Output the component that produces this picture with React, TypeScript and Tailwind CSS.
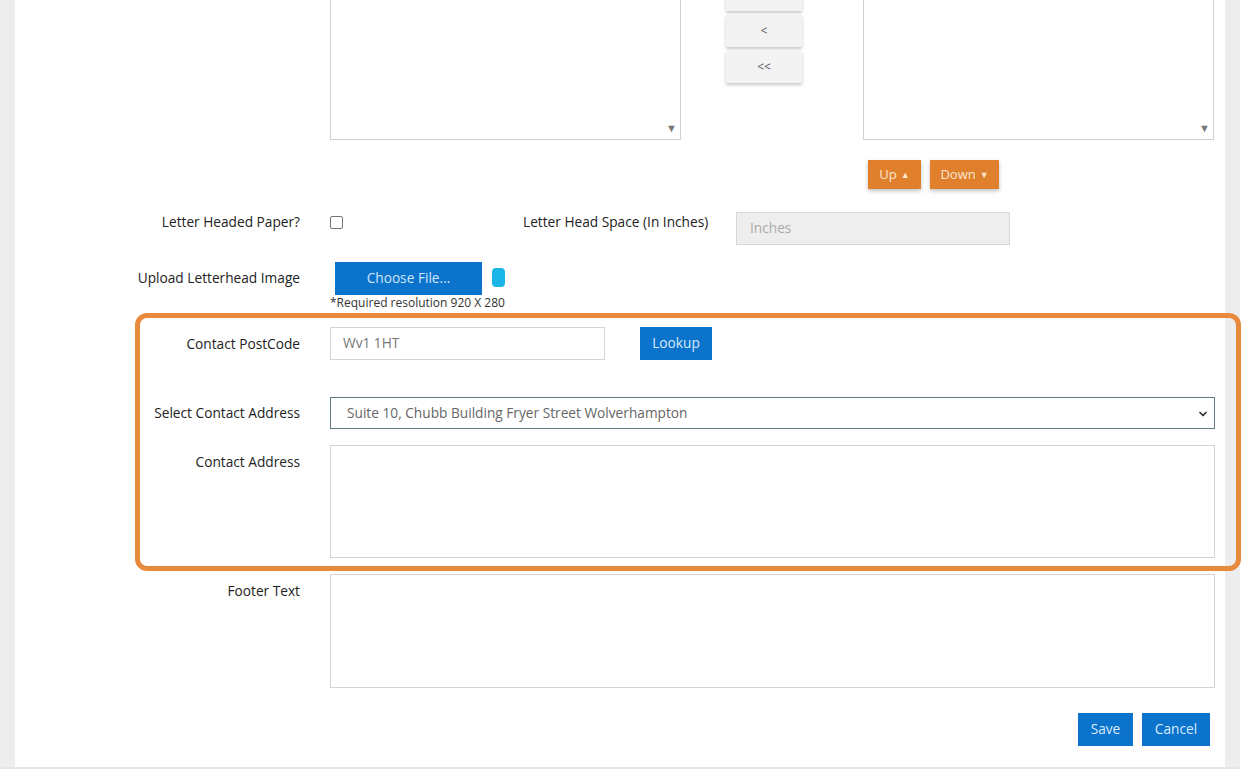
import React from 'react';
import { ChevronDown } from 'lucide-react';

const label = "text-right text-[13.7px] leading-5 text-[#222]";
const blueBtn = "bg-[#0b73cb] text-[13.7px] flex items-center justify-center";
const orangeBtn = "bg-[#e07f2c] text-[#fde7cf] text-[13px] flex items-center justify-center gap-1 shadow-[0_2px_4px_rgba(0,0,0,0.25)]";
const moveBtn = "h-[32px] w-[76px] bg-[#f3f3f3] text-[12px] text-[#555] flex items-center justify-center shadow-[0_2px_3px_rgba(0,0,0,0.22)]";

function ListBox() {
  return (
    <div className="relative h-full w-[351px] border-x border-b border-[#d2d2d2] bg-white">
      <span className="absolute right-[3px] bottom-[6px] text-[11px] leading-none text-[#777]">▼</span>
    </div>
  );
}

export default function App() {
  return (
    <div
      className="relative flex h-[769px] w-[1259px] overflow-hidden bg-white"
      style={{ fontFamily: '"Open Sans", "Liberation Sans", sans-serif' }}
    >
      <div className="w-[15px] bg-[#eeeded]" />

      {/* main card */}
      <div className="flex h-[767px] w-[1210px] flex-col bg-white">
        <div className="grid grid-cols-[285px_1fr] gap-x-[30px] pr-[10px]">
          {/* list boxes */}
          <div />
          <div className="flex h-[140px] items-start">
            <ListBox />
            <div className="ml-[45px] -mt-[21px] flex flex-col gap-[4px]">
              <button className={moveBtn} aria-label="move right" />
              <button className={moveBtn}>&lt;</button>
              <button className={moveBtn}>&lt;&lt;</button>
            </div>
            <div className="ml-[61px] h-full">
              <ListBox />
            </div>
          </div>

          {/* up / down */}
          <div />
          <div className="mt-[20px] flex h-[29px] gap-[9px] pl-[538px]">
            <button className={`${orangeBtn} w-[53px]`}>Up <span className="text-[9px]">▲</span></button>
            <button className={`${orangeBtn} w-[69px]`}>Down <span className="text-[9px]">▼</span></button>
          </div>

          {/* letter headed paper */}
          <div className={`${label} mt-[23px]`}>Letter Headed Paper?</div>
          <div className="mt-[23px] flex h-[33px] items-start">
            <div className="mt-[4px] h-[13px] w-[13px] rounded-[2px] border border-[#767676] bg-white" />
            <div className="ml-[180px] text-[13.7px] leading-5 text-[#222]">Letter Head Space (In Inches)</div>
            <div className="ml-auto mr-[205px] flex h-[33px] w-[274px] items-center border border-[#d6d6d6] bg-[#eeeeee] px-[13px] text-[13.7px] text-[#aaa]">
              Inches
            </div>
          </div>

          {/* upload */}
          <div className={`${label} mt-[17px] pt-[6px]`}>Upload Letterhead Image</div>
          <div className="mt-[17px]">
            <div className="flex h-[33px] items-start">
              <button className={`${blueBtn} ml-[5px] h-[33px] w-[147px] text-[#cfe6fb]`}>Choose File...</button>
              <div className="ml-[10px] mt-[6px] h-[19px] w-[13px] rounded-[4px] bg-[#1bb5e8]" />
            </div>
            <div className="text-[12px] leading-4 text-[#333]">*Required resolution 920 X 280</div>
          </div>

          {/* postcode */}
          <div className={`${label} mt-[16px] pt-[7px]`}>Contact PostCode</div>
          <div className="mt-[16px] flex h-[33px]">
            <div className="flex w-[275px] items-center border border-[#d4d4d4] px-[12px] text-[13.7px] text-[#777]">Wv1 1HT</div>
            <button className={`${blueBtn} ml-[35px] w-[72px] text-[#d8ebfc]`}>Lookup</button>
          </div>

          {/* select address */}
          <div className={`${label} mt-[37px] pt-[6px]`}>Select Contact Address</div>
          <div className="relative mt-[37px] flex h-[32px] items-center border border-[#5f7a80] pl-[16px] text-[13.7px] text-[#666]">
            Suite 10, Chubb Building Fryer Street Wolverhampton
            <ChevronDown className="absolute right-[5px] top-[10px] h-[12px] w-[12px] text-[#333]" strokeWidth={3.5} />
          </div>

          {/* contact address */}
          <div className={`${label} mt-[16px] pt-[7px]`}>Contact Address</div>
          <div className="mt-[16px] h-[113px] border border-[#d4d4d4]" />

          {/* footer */}
          <div className={`${label} mt-[16px] pt-[7px]`}>Footer Text</div>
          <div className="mt-[16px] h-[114px] border border-[#d4d4d4]" />

          {/* actions */}
          <div />
          <div className="mt-[25px] flex justify-end gap-[9px] pr-[5px]">
            <button className={`${blueBtn} h-[33px] w-[55px] text-[#d8ebfc]`}>Save</button>
            <button className={`${blueBtn} h-[33px] w-[68px] text-[#d8ebfc]`}>Cancel</button>
          </div>
        </div>
      </div>

      <div className="w-[15px] bg-[#eeeded]" />
      <div className="flex-1 bg-white" />

      <div className="absolute bottom-0 left-0 h-[2px] w-[1240px] bg-[#e6e5e5]" />

      {/* highlight annotation */}
      <div className="pointer-events-none absolute left-[135px] top-[313px] h-[258px] w-[1106px] rounded-[12px] border-[5px] border-[#e88a3b]" />
    </div>
  );
}
